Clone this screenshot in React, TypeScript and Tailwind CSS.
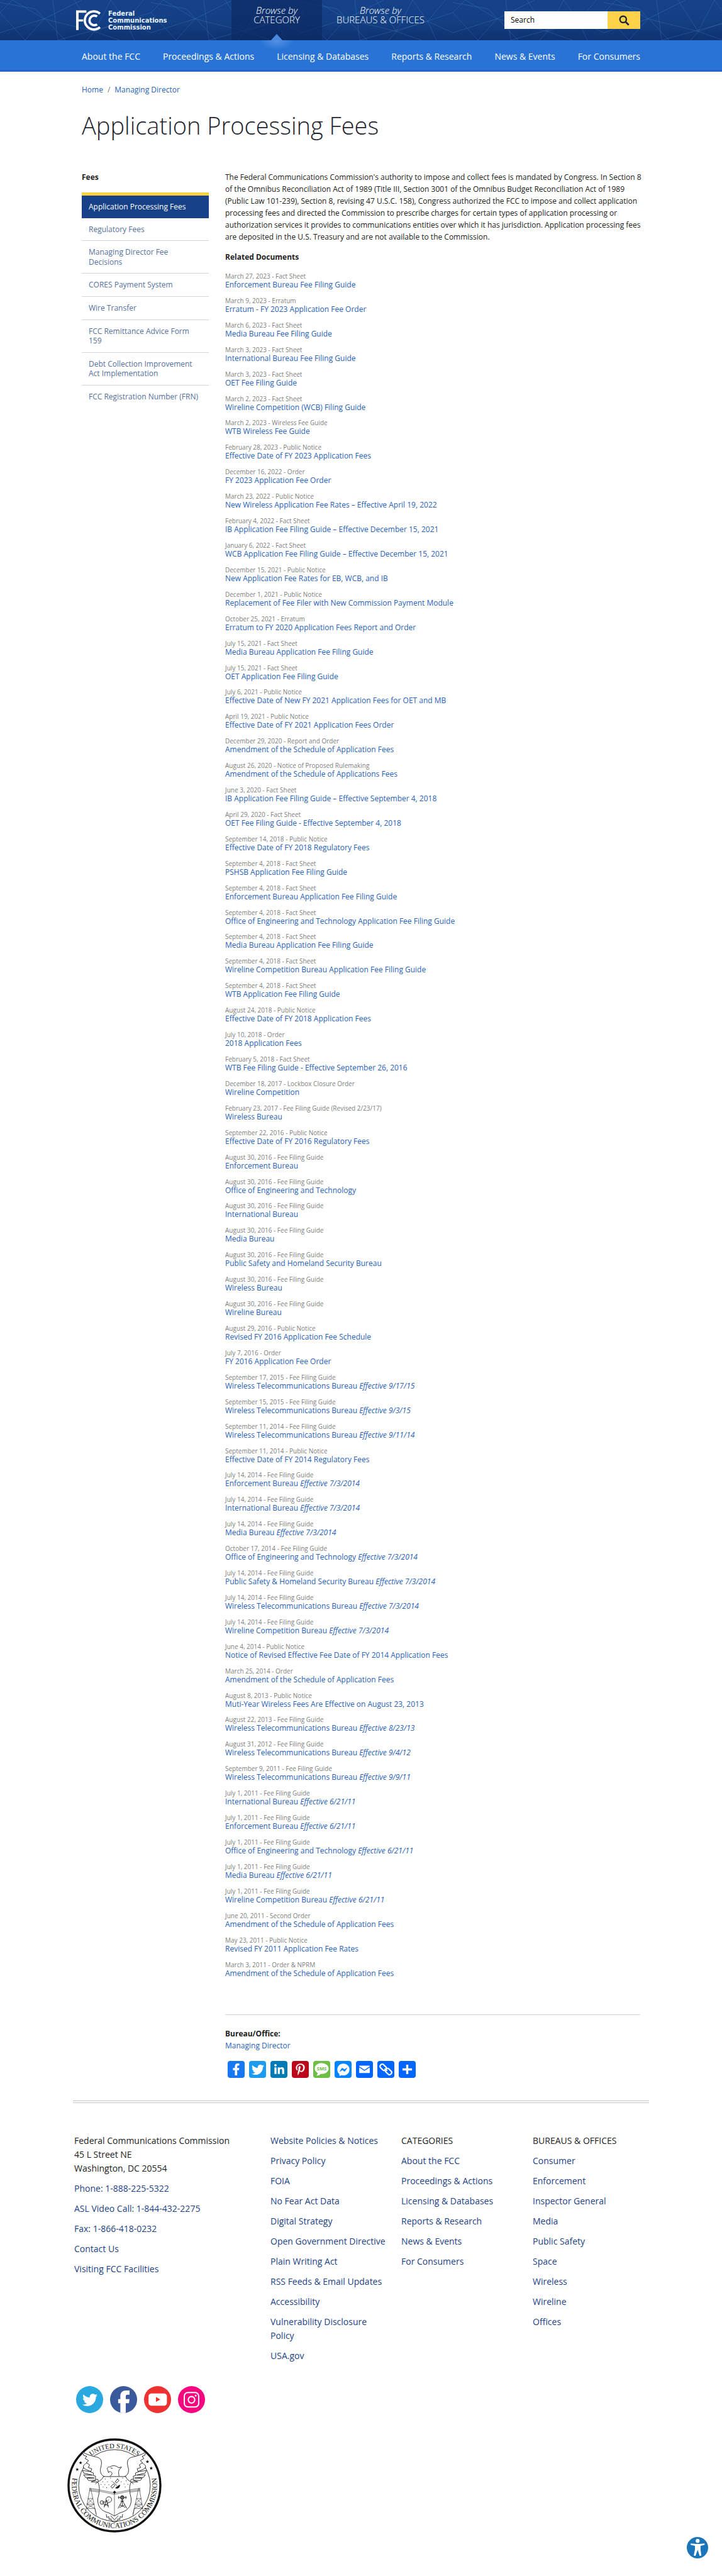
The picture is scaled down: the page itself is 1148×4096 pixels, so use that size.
import React from "react";
import { FaFacebookF, FaFacebookMessenger, FaLinkedinIn, FaPinterestP, FaTwitter } from "react-icons/fa";

type Doc = [meta: string, title: string, effective?: string];

const documents: Doc[] = [
  ["March 27, 2023 - Fact Sheet", "Enforcement Bureau Fee Filing Guide"],
  ["March 9, 2023 - Erratum", "Erratum - FY 2023 Application Fee Order"],
  ["March 6, 2023 - Fact Sheet", "Media Bureau Fee Filing Guide"],
  ["March 3, 2023 - Fact Sheet", "International Bureau Fee Filing Guide"],
  ["March 3, 2023 - Fact Sheet", "OET Fee Filing Guide"],
  ["March 2, 2023 - Fact Sheet", "Wireline Competition (WCB) Filing Guide"],
  ["March 2, 2023 - Wireless Fee Guide", "WTB Wireless Fee Guide"],
  ["February 28, 2023 - Public Notice", "Effective Date of FY 2023 Application Fees"],
  ["December 16, 2022 - Order", "FY 2023 Application Fee Order"],
  ["March 23, 2022 - Public Notice", "New Wireless Application Fee Rates – Effective April 19, 2022"],
  ["February 4, 2022 - Fact Sheet", "IB Application Fee Filing Guide – Effective December 15, 2021"],
  ["January 6, 2022 - Fact Sheet", "WCB Application Fee Filing Guide – Effective December 15, 2021"],
  ["December 15, 2021 - Public Notice", "New Application Fee Rates for EB, WCB, and IB"],
  ["December 1, 2021 - Public Notice", "Replacement of Fee Filer with New Commission Payment Module"],
  ["October 25, 2021 - Erratum", "Erratum to FY 2020 Application Fees Report and Order"],
  ["July 15, 2021 - Fact Sheet", "Media Bureau Application Fee Filing Guide"],
  ["July 15, 2021 - Fact Sheet", "OET Application Fee Filing Guide"],
  ["July 6, 2021 - Public Notice", "Effective Date of New FY 2021 Application Fees for OET and MB"],
  ["April 19, 2021 - Public Notice", "Effective Date of FY 2021 Application Fees Order"],
  ["December 29, 2020 - Report and Order", "Amendment of the Schedule of Application Fees"],
  ["August 26, 2020 - Notice of Proposed Rulemaking", "Amendment of the Schedule of Applications Fees"],
  ["June 3, 2020 - Fact Sheet", "IB Application Fee Filing Guide – Effective September 4, 2018"],
  ["April 29, 2020 - Fact Sheet", "OET Fee Filing Guide - Effective September 4, 2018"],
  ["September 14, 2018 - Public Notice", "Effective Date of FY 2018 Regulatory Fees"],
  ["September 4, 2018 - Fact Sheet", "PSHSB Application Fee Filing Guide"],
  ["September 4, 2018 - Fact Sheet", "Enforcement Bureau Application Fee Filing Guide"],
  ["September 4, 2018 - Fact Sheet", "Office of Engineering and Technology Application Fee Filing Guide"],
  ["September 4, 2018 - Fact Sheet", "Media Bureau Application Fee Filing Guide"],
  ["September 4, 2018 - Fact Sheet", "Wireline Competition Bureau Application Fee Filing Guide"],
  ["September 4, 2018 - Fact Sheet", "WTB Application Fee Filing Guide"],
  ["August 24, 2018 - Public Notice", "Effective Date of FY 2018 Application Fees"],
  ["July 10, 2018 - Order", "2018 Application Fees"],
  ["February 5, 2018 - Fact Sheet", "WTB Fee Filing Guide - Effective September 26, 2016"],
  ["December 18, 2017 - Lockbox Closure Order", "Wireline Competition"],
  ["February 23, 2017 - Fee Filing Guide (Revised 2/23/17)", "Wireless Bureau"],
  ["September 22, 2016 - Public Notice", "Effective Date of FY 2016 Regulatory Fees"],
  ["August 30, 2016 - Fee Filing Guide", "Enforcement Bureau"],
  ["August 30, 2016 - Fee Filing Guide", "Office of Engineering and Technology"],
  ["August 30, 2016 - Fee Filing Guide", "International Bureau"],
  ["August 30, 2016 - Fee Filing Guide", "Media Bureau"],
  ["August 30, 2016 - Fee Filing Guide", "Public Safety and Homeland Security Bureau"],
  ["August 30, 2016 - Fee Filing Guide", "Wireless Bureau"],
  ["August 30, 2016 - Fee Filing Guide", "Wireline Bureau"],
  ["August 29, 2016 - Public Notice", "Revised FY 2016 Application Fee Schedule"],
  ["July 7, 2016 - Order", "FY 2016 Application Fee Order"],
  ["September 17, 2015 - Fee Filing Guide", "Wireless Telecommunications Bureau", "Effective 9/17/15"],
  ["September 15, 2015 - Fee Filing Guide", "Wireless Telecommunications Bureau", "Effective 9/3/15"],
  ["September 11, 2014 - Fee Filing Guide", "Wireless Telecommunications Bureau", "Effective 9/11/14"],
  ["September 11, 2014 - Public Notice", "Effective Date of FY 2014 Regulatory Fees"],
  ["July 14, 2014 - Fee Filing Guide", "Enforcement Bureau", "Effective 7/3/2014"],
  ["July 14, 2014 - Fee Filing Guide", "International Bureau", "Effective 7/3/2014"],
  ["July 14, 2014 - Fee Filing Guide", "Media Bureau", "Effective 7/3/2014"],
  ["October 17, 2014 - Fee Filing Guide", "Office of Engineering and Technology", "Effective 7/3/2014"],
  ["July 14, 2014 - Fee Filing Guide", "Public Safety & Homeland Security Bureau", "Effective 7/3/2014"],
  ["July 14, 2014 - Fee Filing Guide", "Wireless Telecommunications Bureau", "Effective 7/3/2014"],
  ["July 14, 2014 - Fee Filing Guide", "Wireline Competition Bureau", "Effective 7/3/2014"],
  ["June 4, 2014 - Public Notice", "Notice of Revised Effective Fee Date of FY 2014 Application Fees"],
  ["March 25, 2014 - Order", "Amendment of the Schedule of Application Fees"],
  ["August 8, 2013 - Public Notice", "Muti-Year Wireless Fees Are Effective on August 23, 2013"],
  ["August 22, 2013 - Fee Filing Guide", "Wireless Telecommunications Bureau", "Effective 8/23/13"],
  ["August 31, 2012 - Fee Filing Guide", "Wireless Telecommunications Bureau", "Effective 9/4/12"],
  ["September 9, 2011 - Fee Filing Guide", "Wireless Telecommunications Bureau", "Effective 9/9/11"],
  ["July 1, 2011 - Fee Filing Guide", "International Bureau", "Effective 6/21/11"],
  ["July 1, 2011 - Fee Filing Guide", "Enforcement Bureau", "Effective 6/21/11"],
  ["July 1, 2011 - Fee Filing Guide", "Office of Engineering and Technology", "Effective 6/21/11"],
  ["July 1, 2011 - Fee Filing Guide", "Media Bureau", "Effective 6/21/11"],
  ["July 1, 2011 - Fee Filing Guide", "Wireline Competition Bureau", "Effective 6/21/11"],
  ["June 20, 2011 - Second Order", "Amendment of the Schedule of Application Fees"],
  ["May 23, 2011 - Public Notice", "Revised FY 2011 Application Fee Rates"],
  ["March 3, 2011 - Order & NPRM", "Amendment of the Schedule of Application Fees"],
];

const navItems = ["About the FCC", "Proceedings & Actions", "Licensing & Databases", "Reports & Research", "News & Events", "For Consumers"];

const sideItems = [
  "Regulatory Fees",
  "Managing Director Fee Decisions",
  "CORES Payment System",
  "Wire Transfer",
  "FCC Remittance Advice Form 159",
  "Debt Collection Improvement Act Implementation",
  "FCC Registration Number (FRN)",
];

const contactLinks = ["Phone: 1-888-225-5322", "ASL Video Call: 1-844-432-2275", "Fax: 1-866-418-0232", "Contact Us", "Visiting FCC Facilities"];

const policyLinks = [
  "Website Policies & Notices",
  "Privacy Policy",
  "FOIA",
  "No Fear Act Data",
  "Digital Strategy",
  "Open Government Directive",
  "Plain Writing Act",
  "RSS Feeds & Email Updates",
  "Accessibility",
  "Vulnerability Disclosure Policy",
  "USA.gov",
];

const officeLinks = ["Consumer", "Enforcement", "Inspector General", "Media", "Public Safety", "Space", "Wireless", "Wireline", "Offices"];

/* Faint network of crossing lines behind the masthead. */
function MastheadPattern() {
  return (
    <svg className="absolute inset-0 h-full w-full" aria-hidden="true">
      <defs>
        <pattern id="net" width="240" height="64" patternUnits="userSpaceOnUse">
          <g stroke="#4f86cc" strokeOpacity="0.28" strokeWidth="1" fill="none">
            <path d="M0 52 L70 30 L130 0 M70 30 L40 64 M70 30 L20 0 M70 30 L150 50 L240 20 M150 50 L118 0 M150 50 L176 0 M150 50 L138 64 M150 50 L190 64 M0 20 L40 64 M240 52 L200 34 L176 0 M200 34 L214 64 M200 34 L228 0 M200 34 L92 64 M92 64 L84 0 M20 0 L0 20 M0 4 L56 14 L104 64" />
          </g>
        </pattern>
      </defs>
      <rect width="100%" height="100%" fill="url(#net)" />
    </svg>
  );
}

function FccMark() {
  return (
    <svg viewBox="0 0 138 116" className="h-[33px] w-[39px]" fill="none" stroke="#fff" aria-hidden="true">
      <path d="M7 112 V8 H58" strokeWidth="14" />
      <path d="M12 58 H40" strokeWidth="12" />
      <path d="M134 20 A51 51 0 1 0 134 96" strokeWidth="13" />
      <path d="M118 36 A27 27 0 1 0 118 80" strokeWidth="13" />
    </svg>
  );
}

function Header() {
  return (
    <header>
      <div className="relative bg-linear-to-b from-[#164289] via-[#134085] to-[#0f3270]">
        <MastheadPattern />
        <div className="relative mx-auto flex h-16 max-w-[916px] items-stretch">
          <a href="#" className="flex w-[252px] items-center gap-3 pl-[5px] text-white">
            <FccMark />
            <span className="w-[110px] font-['DejaVu_Sans',sans-serif] text-[10px] leading-[11px] font-bold text-[#e8f1fb]">
              Federal Communications Commission
            </span>
          </a>
          <button className="relative w-[144px] bg-[#0c2a63]/70 pb-4 text-center text-[15px] leading-[15px] font-light text-white">
            <i>Browse by</i>
            <br />
            CATEGORY
            <span className="absolute -bottom-4 left-1/2 z-10 h-8 w-14 -translate-x-1/2 rounded-full bg-[radial-gradient(closest-side,#5692e8,transparent)] [clip-path:inset(16px_0_0_0)]" />
            <span className="absolute bottom-0 left-1/2 z-10 h-[10px] w-[18px] -translate-x-1/2 bg-[#4a88e0] [clip-path:polygon(50%_0,100%_100%,0_100%)]" />
          </button>
          <button className="px-[23px] pb-4 text-center text-[15px] leading-[15px] font-light text-white">
            <i>Browse by</i>
            <br />
            BUREAUS &amp; OFFICES
          </button>
          <form className="mt-[18px] mr-[14px] ml-auto flex h-7 w-[216px] self-start">
            <input
              aria-label="Search"
              placeholder="Search"
              className="min-w-0 flex-1 bg-white px-[10px] text-[12px] text-black placeholder:text-black"
            />
            <button aria-label="Submit search" className="flex w-[52px] items-center justify-center bg-[#ffd24c]">
              <svg viewBox="0 0 20 20" className="h-[17px] w-[17px]" fill="none" stroke="#1b2733">
                <circle cx="8" cy="8" r="6" strokeWidth="2.8" />
                <path d="M12.3 12.3 L18.5 18.5" strokeWidth="3.2" />
              </svg>
            </button>
          </form>
        </div>
      </div>
      <nav className="border-b-[3px] border-[#2265c4] bg-[#2873d5]">
        <ul className="mx-auto flex h-[47px] max-w-[916px] items-center justify-between px-[14px] pt-[3px] text-[14px] text-white">
          {navItems.map((t) => (
            <li key={t}>
              <a href="#">{t}</a>
            </li>
          ))}
        </ul>
      </nav>
    </header>
  );
}

function Sidebar() {
  return (
    <aside className="w-[202px] shrink-0 text-[12px]">
      <h2 className="leading-[19px] font-bold">Fees</h2>
      <ul className="mt-[15px] leading-[1.3]">
        <li className="border-t-[5px] border-[#fbd13f]">
          <a href="#" className="block bg-[#164189] px-[11px] py-[10px] text-white">
            Application Processing Fees
          </a>
        </li>
        {sideItems.map((t) => (
          <li key={t} className="border-b border-[#d5d5d5] last:border-b-0">
            <a href="#" className="block px-[11px] py-[10px] text-[#56709c]">
              {t}
            </a>
          </li>
        ))}
      </ul>
    </aside>
  );
}

function ShareTile({ label, color, children }: { label: string; color: string; children: React.ReactNode }) {
  return (
    <a href="#" aria-label={label} className={`flex h-[27px] w-[27px] items-center justify-center rounded-[4px] text-white ${color}`}>
      {children}
    </a>
  );
}

function ShareBar() {
  return (
    <div className="mt-[15px] flex gap-[7px] pl-[4px]">
      <ShareTile label="Facebook" color="bg-[#1877f2]">
        <FaFacebookF size={19} />
      </ShareTile>
      <ShareTile label="Twitter" color="bg-[#1d9bf0]">
        <FaTwitter size={20} />
      </ShareTile>
      <ShareTile label="LinkedIn" color="bg-[#007bb5]">
        <FaLinkedinIn size={18} />
      </ShareTile>
      <ShareTile label="Pinterest" color="bg-[#bd081c]">
        <FaPinterestP size={19} />
      </ShareTile>
      <ShareTile label="SMS" color="bg-[#6cbe45]">
        <svg viewBox="0 0 32 32" className="h-full w-full">
          <path fill="#fff" d="M16 4C8.700 4 2.900 8.600 2.900 14.300c0 3.500 2.200 6.600 5.500 8.500-.2 2-.9 3.700-2.400 5.100 3.100-.2 5.800-1.300 7.800-3.400 8.500.9 15.300-4 15.300-10.200C29.100 8.600 23.300 4 16 4z" />
          <text x="16" y="17.500" textAnchor="middle" fontSize="9" fontWeight="700" fill="#6cbe45" fontFamily="Open Sans, sans-serif">
            SMS
          </text>
        </svg>
      </ShareTile>
      <ShareTile label="Messenger" color="bg-[#0084ff]">
        <FaFacebookMessenger size={20} />
      </ShareTile>
      <ShareTile label="Email" color="bg-[#0166ff]">
        <svg viewBox="0 0 32 32" className="h-full w-full">
          <path fill="#fff" d="M26 21.250v-9.200s-9.100 6.300-9.900 6.600C15.300 18.400 6.100 12 6.100 12v9.200c0 1.300.3 1.600 1.600 1.600h16.800c1.300 0 1.500-.3 1.500-1.550zM26 10c0-.9-.3-1.200-1.500-1.200H7.700C6.400 8.800 6.100 9.200 6.100 10.200l.1.100 9.900 6.600 9.900-6.700z" />
        </svg>
      </ShareTile>
      <ShareTile label="Copy link" color="bg-[#0166ff]">
        <svg viewBox="0 0 32 32" className="h-full w-full" fill="none" stroke="#fff" strokeWidth="2.6">
          <rect x="4.500" y="8" width="13" height="8" rx="3.500" transform="rotate(45 11 12)" />
          <rect x="14.500" y="16" width="13" height="8" rx="3.500" transform="rotate(45 21 20)" />
          <path d="M13.500 14.500 L18.500 18.500" />
        </svg>
      </ShareTile>
      <ShareTile label="More" color="bg-[#0166ff]">
        <svg viewBox="0 0 32 32" className="h-full w-full" fill="#fff">
          <path d="M14 7h4v18h-4zM7 14h18v4H7z" />
        </svg>
      </ShareTile>
    </div>
  );
}

function FooterLinks({ items }: { items: string[] }) {
  return (
    <ul className="flex flex-col gap-[10px]">
      {items.map((t) => (
        <li key={t}>
          <a href="#" className="text-[#1d3f87]">
            {t}
          </a>
        </li>
      ))}
    </ul>
  );
}

function Seal() {
  const star = "M0 -5 L1.300 -1.600 L5 -1.500 L2 0.800 L3 4.200 L0 2.200 L-3 4.200 L-2 0.800 L-5 -1.500 L-1.300 -1.600Z";
  const dots = [
    [232, 640], [262, 634], [300, 640], [330, 634], [350, 650], [218, 655], [245, 655], [270, 652], [322, 655],
    [338, 668], [208, 670], [230, 672], [252, 672], [360, 670], [315, 675], [345, 685], [220, 685], [240, 688],
  ];
  return (
    <svg viewBox="18 410 532 532" className="h-[150px] w-[150px]" role="img" aria-label="FCC seal" fill="none" stroke="#111">
      <defs>
        <path id="seal-top" d="M73 676 A211 211 0 0 1 495 676" />
        <path id="seal-bottom" d="M58.500 594 A240 240 0 1 0 509.500 594" />
      </defs>
      <circle cx="284" cy="676" r="259" strokeWidth="12" />
      <circle cx="284" cy="676" r="202" strokeWidth="3" />
      <g fill="#111" stroke="none" fontFamily="Liberation Serif, serif">
        <text fontSize="38">
          <textPath href="#seal-top" startOffset="50%" textAnchor="middle">UNITED STATES</textPath>
        </text>
        <text fontSize="41">
          <textPath href="#seal-bottom" startOffset="50%" textAnchor="middle">FEDERAL COMMUNICATIONS COMMISSION</textPath>
        </text>
        <path d={star} transform="translate(93 548) scale(2)" />
        <path d={star} transform="translate(74 586) scale(2)" />
        <path d={star} transform="translate(470 542) scale(2)" />
        <path d={star} transform="translate(491 579) scale(2)" />
      </g>
      <g strokeWidth="3" fill="#fff">
        <path d="M124 550 L108 566 L112 580 L150 598 L104 592 L110 606 L160 618 L110 616 L120 630 L170 634 L128 636 L138 648 L180 646 L152 656 L190 656 L176 668" />
        <path d="M103 486 C130 505 160 510 190 518 C212 526 214 545 208 570 C200 595 205 618 228 626 C224 640 210 645 196 660 L190 642 L176 640 L178 624 L164 620 L166 606 L150 600 L156 582 L136 575 L144 560 L126 548 L138 536 L118 524 L128 512 L110 506 Z" />
        <path d="M444 550 L460 566 L456 580 L418 598 L464 592 L458 606 L408 618 L458 616 L448 630 L398 634 L440 636 L430 648 L388 646 L416 656 L378 656 L392 668" />
        <path d="M461 486 C438 505 408 510 378 518 C356 526 354 545 360 570 C368 595 363 618 340 626 C344 640 358 645 372 660 L378 642 L392 640 L390 624 L404 620 L402 606 L418 600 L412 582 L432 575 L424 560 L442 548 L430 536 L450 524 L440 512 L455 506 Z" />
      </g>
      <path d="M258 624 C276 616 274 596 254 598 L250 604 L246 588 C238 580 246 570 258 572 C272 560 296 564 306 576 L324 572 L312 586 C304 598 308 610 310 624 M262 577 L274 580" strokeWidth="3" />
      <g strokeWidth="2">
        <path d="M146 692 L122 822 M150 692 L182 846 M134 750 H162 M129 782 H169 M125 806 H174 M134 750 L169 782 L125 806 M162 750 L129 782 L174 806 L182 840" />
        <path d="M424 692 L446 822 M420 692 L388 846 M434 750 H408 M440 782 H400 M444 806 H395 M434 750 L400 782 L444 806 M408 750 L440 782 L395 806 L388 840" />
        <path d="M142 692 L284 712 L430 692 M142 699 L284 719 L430 699 M142 706 L284 725 L430 706" />
      </g>
      <path d="M222 626 H348 C352 640 362 648 378 656 C362 690 372 720 378 750 C382 800 350 822 316 830 L284 848 L250 830 C216 822 186 800 190 750 C198 720 206 690 190 656 C206 648 216 640 222 626Z" strokeWidth="3" fill="#fff" />
      <path d="M202 702 L284 718 L368 702 M202 709 L284 726 L368 709 M284 714 V848" strokeWidth="2" />
      <path d="M276 714 L284 706 L293 714 L284 723Z" fill="#111" />
      <g fill="#111" stroke="none">
        {dots.map(([x, y]) => (
          <circle key={`${x}-${y}`} cx={x} cy={y} r="2" />
        ))}
      </g>
      <g strokeWidth="3">
        <path d="M288 655 L302 640 L310 648 L296 662Z M264 682 L278 668 L286 676 L272 692Z M276 656 L298 678" />
        <path d="M290 690 C304 696 316 686 312 674 Z" fill="#111" />
        <circle cx="213" cy="772" r="10" />
        <circle cx="252" cy="756" r="16" />
        <path d="M238 758 L226 800 M238 758 L250 800 M220 780 L252 790 M250 776 L224 792 M244 764 L252 756 M214 772 L234 768" />
        <path d="M328 732 V790 M328 760 L304 806 M328 760 L354 806 M304 744 H354 M308 736 V752 M348 736 V752 M314 786 L346 800 M342 786 L312 800 M318 764 H338" />
        <circle cx="328" cy="744" r="9" strokeWidth="4" />
        <path d="M238 838 L240 856 L252 852 L254 868 L264 864 L268 878 L284 884 L300 878 L304 864 L314 868 L316 852 L328 856 L330 838 M262 846 L284 870 L306 846" />
      </g>
    </svg>
  );
}

function SocialIcons() {
  return (
    <div className="flex gap-[11px] pl-[5px]">
      <a href="#" aria-label="Twitter" className="flex h-[43px] w-[43px] items-center justify-center rounded-full bg-[#2aa9e0] text-white">
        <FaTwitter size={24} />
      </a>
      <a href="#" aria-label="Facebook" className="h-[43px] w-[43px] overflow-hidden rounded-full bg-[#3b5a9b]">
        <svg viewBox="0 0 150 150" fill="#fff">
          <path d="M57 150 V95 H45 V72 H57 V55 C57 34 70 24 88 24 H108 V48 H96 C89 48 87 52 87 58 V72 H108 L105 95 H87 V150Z" />
        </svg>
      </a>
      <a href="#" aria-label="YouTube" className="h-[43px] w-[43px] rounded-full bg-[#ee3131]">
        <svg viewBox="0 0 150 150">
          <rect x="25" y="41" width="102" height="68" rx="16" fill="#fff" />
          <path d="M66 60 V88 L90 74Z" fill="#ee3131" />
        </svg>
      </a>
      <a href="#" aria-label="Instagram" className="h-[43px] w-[43px] rounded-full bg-[#f5087f]">
        <svg viewBox="0 0 150 150" fill="none" stroke="#fff" strokeWidth="7">
          <rect x="35" y="36" width="80" height="80" rx="20" />
          <circle cx="75" cy="76" r="18" />
          <circle cx="98" cy="53" r="5" fill="#fff" stroke="none" />
        </svg>
      </a>
    </div>
  );
}

function Footer() {
  return (
    <footer className="mx-auto max-w-[916px] text-[14px] leading-[22px] text-[#222]">
      <div className="h-1 border-y border-[#c4c4c4]" />
      <div className="mt-[49px] grid grid-cols-[312px_208px_209px_1fr] pl-[2px]">
        <div>
          <address className="mb-[10px] not-italic">
            Federal Communications Commission
            <br />
            45 L Street NE
            <br />
            Washington, DC 20554
          </address>
          <FooterLinks items={contactLinks} />
        </div>
        <div className="pr-6">
          <FooterLinks items={policyLinks} />
        </div>
        <div>
          <h2 className="mb-[10px]">CATEGORIES</h2>
          <FooterLinks items={navItems} />
        </div>
        <div>
          <h2 className="mb-[10px]">BUREAUS &amp; OFFICES</h2>
          <FooterLinks items={officeLinks} />
        </div>
      </div>
      <div className="mt-[37px]">
        <SocialIcons />
      </div>
      <div className="-ml-[9px] pt-10 pb-[70px]">
        <Seal />
      </div>
    </footer>
  );
}

export default function App() {
  return (
    <div className="bg-white font-['Open_Sans',sans-serif] text-[#222]">
      <Header />
      <main className="mx-auto max-w-[916px] px-[14px] text-[12px]">
        <nav aria-label="Breadcrumb" className="mt-[19px] leading-[19px] text-[#777]">
          <a href="#" className="text-[#2a62b8]">Home</a>
          <span className="px-[7px]">/</span>
          <a href="#" className="text-[#2a62b8]">Managing Director</a>
        </nav>
        <h1 className="mt-[22px] text-[38px] leading-[50px] font-light text-[#1f2530]">Application Processing Fees</h1>
        <div className="mt-[48px] flex gap-[26px]">
          <Sidebar />
          <div className="min-w-0 flex-1">
            <p className="-mr-2 leading-[19px]">
              The Federal Communications Commission&#39;s authority to impose and collect fees is mandated by Congress. In Section 8 of the
              Omnibus Reconciliation Act of 1989 (Title III, Section 3001 of the Omnibus Budget Reconciliation Act of 1989 (Public Law
              101-239), Section 8, revising 47 U.S.C. 158), Congress authorized the FCC to impose and collect application processing fees
              and directed the Commission to prescribe charges for certain types of application processing or authorization services it
              provides to communications entities over which it has jurisdiction. Application processing fees are deposited in the U.S.
              Treasury and are not available to the Commission.
            </p>
            <h2 className="mt-[13px] leading-[19px] font-bold">Related Documents</h2>
            <ul className="mt-[15px]">
              {documents.map(([meta, title, effective], i) => (
                <li key={i} className="mb-[10px]">
                  <div className="text-[10px] leading-[12px] text-[#808080]">{meta}</div>
                  <a href="#" className="block leading-[1.41] text-[#2a62b8]">
                    {title}
                    {effective && <i> {effective}</i>}
                  </a>
                </li>
              ))}
            </ul>
            <hr className="mt-[57px] border-[#d0d0d0]" />
            <h2 className="mt-[20px] leading-[19px] font-bold">Bureau/Office:</h2>
            <a href="#" className="block leading-[19px] text-[#2a62b8]">Managing Director</a>
            <ShareBar />
          </div>
        </div>
      </main>
      <div className="mt-[36px]">
        <Footer />
      </div>
      <button aria-label="Accessibility options" className="fixed right-[22px] bottom-[28px] h-[34px] w-[34px] rounded-full bg-[#1a75ba]">
        <svg viewBox="0 0 120 120" fill="#fff">
          <circle cx="61" cy="22" r="11" />
          <path d="M22 36 L50 39 H72 L100 36 V44 L77 49 V70 L82 104 L72 106 L62 74 H60 L49 106 L39 104 L46 70 V49 L22 44Z" />
        </svg>
      </button>
    </div>
  );
}
